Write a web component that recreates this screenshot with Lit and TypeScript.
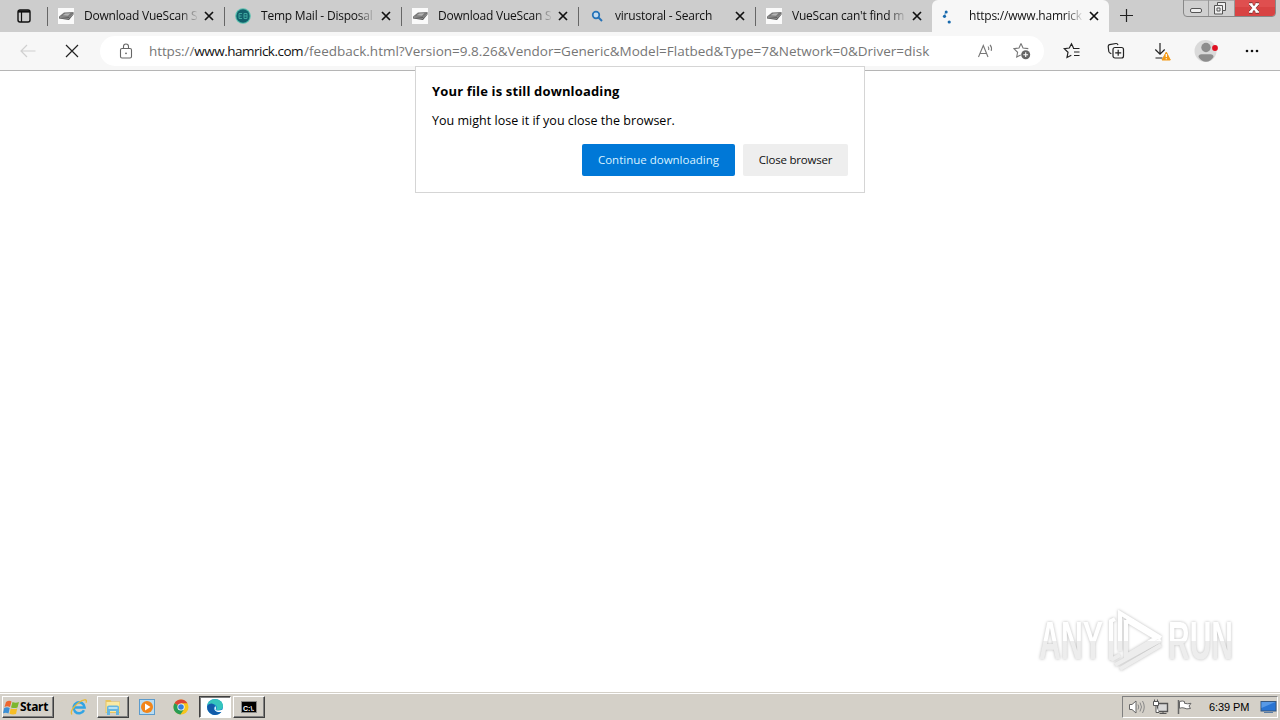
import {LitElement, html, css, svg} from 'lit';
import {customElement, property} from 'lit/decorators.js';
import {classMap} from 'lit/directives/class-map.js';


const scannerIcon = svg`
    <rect width="16" height="16" fill="#fafafa"/>
    <path d="M1 8.5 6 4.5 15.5 4 11 9z" fill="#777"/>
    <path d="M4.5 7.3 7.5 5.5 12.5 5.3 10 7.7z" fill="#b5b5b5"/>
    <path d="M1 8.5 11 9 15.5 4v2.5L11 12 1 10.5z" fill="#555"/>
    <path d="M1.5 9.5 11 10.4 15 6" fill="none" stroke="#aaa" stroke-width=".7"/>
`;

const mailIcon = svg`
    <circle cx="8" cy="8" r="7.8" fill="#55bfae"/>
    <circle cx="8" cy="8" r="6.7" fill="#12606b"/>
    <path d="M7 5.5H4v5h3M4 8h2.5M9 5.5h3v5H9zM9 8h3" fill="none" stroke="#3fa79f" stroke-width="1"/>
`;

const searchIcon = svg`
    <circle cx="7" cy="7" r="3.3" fill="#c5dcef" stroke="#2673b8" stroke-width="1.7"/>
    <path d="M9.5 9.5 13 13" stroke="#2673b8" stroke-width="2"/>
`;

const spinnerIcon = svg`
    <g fill="#1769ad">
        <circle cx="6.2" cy="4" r="1.5"/>
        <circle cx="4.5" cy="8.3" r="1.6"/>
        <circle cx="9.2" cy="14" r="1.6"/>
        <circle cx="5" cy="6" r="1" opacity=".4"/>
    </g>
`;

const favicons = {
    scanner: scannerIcon,
    mail: mailIcon,
    search: searchIcon,
    spinner: spinnerIcon,
};

const tabs = [
    {title: 'Download VueScan S', icon: 'scanner', active: false},
    {title: 'Temp Mail - Disposal', icon: 'mail', active: false},
    {title: 'Download VueScan S', icon: 'scanner', active: false},
    {title: 'virustoral - Search', icon: 'search', active: false},
    {title: "VueScan can't find m", icon: 'scanner', active: false},
    {title: 'https://www.hamrick', icon: 'spinner', active: true},
];


@customElement('browser-tab')
class BrowserTab extends LitElement {

    @property()
    title: string = '';

    @property()
    icon: keyof typeof favicons = 'scanner';

    @property({type: Boolean})
    active: boolean = false;

    render() {
        return html`
            <div class=${classMap({tab: true, active: this.active, url: this.icon === 'spinner'})}>
                <svg class="favicon" width="16" height="16" viewBox="0 0 16 16">${favicons[this.icon]}</svg>
                <span class="title">${this.title}</span>
                <svg class="close" width="10" height="10"><path d="M1 1l8 8M9 1l-8 8" stroke="#111" stroke-width="1.7"/></svg>
            </div>
        `;
    }

    static styles = css`

        :host {
            display: block;
            width: 177px;
            height: 32px;
        }

        .tab {
            box-sizing: border-box;
            height: 32px;
            display: flex;
            align-items: center;
            padding-left: 11px;
            background: linear-gradient(#666, #666) 0 7px / 1px 19px no-repeat;
        }

        .tab.active {
            background: #f7f7f7;
            border-radius: 6px 6px 0 0;
            padding-left: 8px;
        }

        .title {
            width: 114px;
            margin-left: 10px;
            white-space: nowrap;
            font: 12px/20px "Open Sans", sans-serif;
            letter-spacing: -0.22px;
            color: #111;
            -webkit-mask-image: linear-gradient(90deg, #000 96px, transparent 115px);
        }

        .url .title {
            margin-left: 13px;
        }

        .close {
            margin-left: 6px;
        }
    `;
}


@customElement('browser-toolbar')
class BrowserToolbar extends LitElement {

    render() {
        return html`
            <div class="bar">
                <svg class="back" width="16" height="14"><path d="M15.5 7H1M7 1 1 7l6 6" fill="none" stroke="#d0d0d0" stroke-width="1.2"/></svg>
                <svg class="stop" width="14" height="14"><path d="M1 1l12 12M13 1 1 13" stroke="#222" stroke-width="1.2"/></svg>
                <div class="address">
                    <svg class="lock" width="14" height="16">
                        <rect x="1.5" y="5.5" width="11" height="9.5" rx="1.5" fill="none" stroke="#666" stroke-width="1.1"/>
                        <path d="M4.5 5.5v-2a2.5 2.5 0 0 1 5 0v2" fill="none" stroke="#666" stroke-width="1.1"/>
                        <circle cx="7" cy="10.3" r=".9" fill="#666"/>
                    </svg>
                    <div class="text"><span>https://</span><span class="domain">www.hamrick.com</span><span class="path">/feedback.html?Version=9.8.26&amp;Vendor=Generic&amp;Model=Flatbed&amp;Type=7&amp;Network=0&amp;Driver=disk</span></div>
                    <svg class="read" width="18" height="16" fill="none" stroke="#777" stroke-width="1.1">
                        <path d="M1.5 14 6.3 2.5 11 14M3 10.5h6.5M11 3.5q1.300 1.500.6 3.500M13 1.800q2.300 2.700 1.200 6"/>
                    </svg>
                    <svg class="favorite" width="18" height="18">
                        <path d="M8 1.500l2 4.500 5.300.6M8 1.500 6 6l-5 .700 3.600 3.600L3.700 15l4-2" fill="none" stroke="#777" stroke-width="1.1"/>
                        <circle cx="12.700" cy="12.700" r="4.500" fill="#666"/>
                        <path d="M10.300 12.700h4.800M12.700 10.300v4.800" stroke="#fff" stroke-width="1.1"/>
                    </svg>
                </div>
                <div class="actions">
                    <svg width="18" height="18" fill="none" stroke="#222" stroke-width="1.2">
                        <path d="M10.500 6 8.500 1.800 6.300 6l-5 .700L5 10.300 4 15.500l4.300-2.200M10 6.500h6.500M11 10h5.500M11 13.500h5.500"/>
                    </svg>
                    <svg width="18" height="18" fill="none" stroke="#222" stroke-width="1.2">
                        <path d="M4.300 11.700 3 11q-1-.5-1.200-1.500L1.200 4.500q0-1.500 1.300-1.800L9 1.500q1.500-.2 2 1.500"/>
                        <rect x="6" y="5.500" width="10.500" height="10.500" rx="2"/>
                        <path d="M11.200 7.800v6M8.200 10.800h6"/>
                    </svg>
                    <svg class="downloads" width="18" height="20">
                        <path d="M7 2v11M2.300 8.500 7 13.200l4.700-4.700M2.500 17h7" fill="none" stroke="#222" stroke-width="1.2"/>
                        <path d="M13.300 11 17.300 19H9z" fill="#f39a16" stroke="#f39a16" stroke-linejoin="round"/>
                        <path d="M13.300 13v3M13.300 17.200v1" stroke="#fff" stroke-width="1.2"/>
                    </svg>
                    <svg class="profile" width="24" height="24">
                        <circle cx="11.500" cy="12" r="11" fill="#dadada"/>
                        <circle cx="12" cy="8.500" r="4.700" fill="#8d8d8d"/>
                        <path d="M4.500 18q0-2.700 3-2.700h9q3 0 3 2.700-3 4.700-7.500 4.700T4.500 18" fill="#8d8d8d"/>
                        <circle cx="21" cy="9" r="2.900" fill="#e01022"/>
                    </svg>
                    <svg width="16" height="4" fill="#111"><circle cx="3" cy="2" r="1.3"/><circle cx="8" cy="2" r="1.3"/><circle cx="13" cy="2" r="1.3"/></svg>
                </div>
            </div>
        `;
    }

    static styles = css`

        :host {
            display: block;
        }

        .bar {
            box-sizing: border-box;
            height: 39px;
            display: flex;
            align-items: center;
            padding: 0 20px;
            background: #f7f7f7;
            border-bottom: 1px solid #b5b5b5;
        }

        .stop {
            margin-left: 29px;
        }

        .address {
            box-sizing: border-box;
            width: 944px;
            height: 30px;
            margin-left: 21px;
            padding: 0 13px 0 19px;
            display: flex;
            align-items: center;
            background: #fff;
            border-radius: 15px;
        }

        .text {
            margin-left: 16px;
            flex: 1;
            white-space: nowrap;
            font: 13.5px/20px "Open Sans", sans-serif;
            color: #767676;
            letter-spacing: -0.1px;
        }

        .domain {
            color: #111;
            letter-spacing: -0.5px;
        }

        .path {
            margin-left: 1px;
            letter-spacing: 0;
        }

        .favorite {
            margin-left: 18px;
        }

        .actions {
            flex: 1;
            display: flex;
            align-items: center;
            justify-content: space-between;
            margin-left: 19px;
        }

        .downloads {
            margin-left: 2px;
            margin-right: -2px;
        }
    `;
}


@customElement('download-dialog')
class DownloadDialog extends LitElement {

    render() {
        return html`
            <h3>Your file is still downloading</h3>
            <p>You might lose it if you close the browser.</p>
            <div class="buttons">
                <button class="primary">Continue downloading</button>
                <button class="secondary">Close browser</button>
            </div>
        `;
    }

    static styles = css`

        :host {
            display: block;
            box-sizing: border-box;
            width: 450px;
            height: 127px;
            padding: 14px 16px 16px;
            background: #fff;
            border: 1px solid #d5d5d5;
            font-family: "Open Sans", sans-serif;
            color: #000;
        }

        h3 {
            margin: 0;
            font-size: 13px;
            line-height: 20px;
            font-weight: 700;
            letter-spacing: 0.15px;
        }

        p {
            margin: 10px 0 13px;
            font-size: 12.5px;
            line-height: 20px;
            letter-spacing: 0.02px;
        }

        .buttons {
            display: flex;
            justify-content: flex-end;
            gap: 8px;
        }

        button {
            height: 32px;
            padding: 0;
            border: none;
            border-radius: 2px;
            font: 11.5px/20px "Open Sans", sans-serif;
            white-space: nowrap;
        }

        .primary {
            width: 153px;
            background: #0078d7;
            color: #d9f2ff;
        }

        .secondary {
            width: 105px;
            background: #eee;
            color: #111;
            letter-spacing: -0.2px;
        }
    `;
}


@customElement('task-bar')
class TaskBar extends LitElement {

    render() {
        return html`
            <div class="start">
                <svg width="17" height="17">
                    <path d="M3 3q3-2 5.500-.5L7 8Q4 6.700 1.500 8z" fill="#ed6730"/>
                    <path d="M9.500 3q3 1.500 6.500 0L14.500 8.500q-3 1.200-6.500 0z" fill="#7db72f"/>
                    <path d="M1.200 9Q4 7.700 6.700 9L5.500 14.500Q3 13 0 14.200z" fill="#3c8fd5"/>
                    <path d="M7.700 9.500q3.500 1 6.500 0L13 15q-3.500 1-6.500-.3z" fill="#f6bd24"/>
                </svg>
                <b>Start</b>
            </div>
            <div class="apps">
                <div class="app">
                    <svg width="18" height="18">
                        <path d="M14 12.300A5.500 5.500 0 1 1 14.600 9.500H5" fill="none" stroke="#31a4e4" stroke-width="2.500"/>
                        <path d="M2 16.500C-1 13 8 3 14.500 1.800q2.700-.3 1.500 3" fill="none" stroke="#e6b93b" stroke-width="1.300"/>
                    </svg>
                </div>
                <div class="app raised">
                    <svg width="18" height="18">
                        <path d="M1.500 2h5l1 1.500H16V15H1.500z" fill="#e8c45f"/>
                        <path d="M2.500 4h13v10h-13z" fill="#fae9a2"/>
                        <path d="M3 9q0-1.500 2-1.500h8q2 0 2 1.500v8h-3v-4H6v4H3z" fill="#66b6df"/>
                        <path d="M4.500 9h9v2h-9z" fill="#b6e2f4"/>
                    </svg>
                </div>
                <div class="app">
                    <svg width="18" height="18">
                        <rect x="1.500" y="1.500" width="15" height="15" fill="#b9dcf2" stroke="#5c9bcc"/>
                        <circle cx="9" cy="9" r="6" fill="#f28519"/>
                        <path d="M7 5.500v7L12.500 9z" fill="#fff"/>
                    </svg>
                </div>
                <div class="app">
                    <svg width="18" height="18">
                        <circle cx="9" cy="9" r="7.500" fill="#f6c51d"/>
                        <path d="M9 9 2.500 5.200A7.500 7.500 0 0 1 15.500 5.300H9z" fill="#dc4435"/>
                        <path d="M9 9 2.500 5.200A7.500 7.500 0 0 0 8.400 16.500L12.200 11z" fill="#279c55"/>
                        <circle cx="9" cy="9" r="3.600" fill="#fff"/>
                        <circle cx="9" cy="9" r="2.800" fill="#347fdd"/>
                    </svg>
                </div>
                <div class="app pressed">
                    <svg width="18" height="18">
                        <circle cx="9" cy="9" r="8" fill="#1689cf"/>
                        <path d="M1.300 7C3-.7 16.500-1 17 8q-.3 4-4.500 4H10q2-3-.5-5T1.300 7z" fill="#35c5bd"/>
                        <path d="M1.300 8C3 4.500 8 4.500 9 8q-3 3 1.500 6 2.500 1 5.500-.5-4.500 5-9.500 3Q.5 14 1.300 8z" fill="#125ba9"/>
                        <path d="M9.200 8q1.500 2 .3 3.700 2.500 1.800 7.500-.2v2q-4 1-6.500 0-3.300-1.500-1.300-5.500z" fill="#fff"/>
                    </svg>
                </div>
                <div class="app raised">
                    <svg width="18" height="14">
                        <rect x="1.500" y="1.500" width="15" height="11" fill="#000" stroke="#888"/>
                        <text x="3" y="10.500" class="prompt">C:\\.</text>
                    </svg>
                </div>
            </div>
            <div class="tray">
                <svg width="18" height="16" fill="none" stroke="#666">
                    <path d="M1.500 5.500H4L8 2v12l-4-3.500H1.500z" fill="#fff"/>
                    <path d="M10 5.500q1.500 2.500 0 5M12 3.500q3 4.500 0 9M14.500 2q3.500 6 0 12" stroke="#888"/>
                </svg>
                <svg width="18" height="16" fill="none" stroke="#555">
                    <path d="M5.500 4.500h10v8h-10z" fill="#d9d9d9" stroke-width="1.400"/>
                    <path d="M7.500 14.500h7M11 12.500v2"/>
                    <path d="M1.500 2.500h5v4h-5zM2.500.5v2M5.500.5v2M4 6.500v7h3" fill="#fff"/>
                </svg>
                <svg width="18" height="16">
                    <path d="M2.500 1v14" stroke="#666" stroke-width="1.500"/>
                    <path d="M3.500 2.500q3-1 5 0v1.800q3 1 6.500 0L13 7l1.500 2.500q-4 1-6.500-.5-2-.7-4.500.3z" fill="#fff" stroke="#666"/>
                </svg>
                <time>6:39 PM</time>
                <svg class="desktop" width="17" height="14">
                    <rect x="1" y="1.500" width="15" height="9.500" fill="#2874d3" stroke="#35577f"/>
                    <path d="M1.500 2h14L1.500 8z" fill="#5799e6"/>
                    <path d="M4 12.500h9" stroke="#5b7da4"/>
                </svg>
            </div>
        `;
    }

    static styles = css`

        :host {
            display: flex;
            box-sizing: border-box;
            height: 28px;
            padding: 3px 2px 2px;
            background: #d4d0c8;
            border-top: 1px solid #d4d0c8;
            box-shadow: inset 0 1px #fff;
            font-family: "Liberation Sans", sans-serif;
            color: #000;
        }

        .start, .raised {
            border: 1px solid;
            border-color: #fff #404040 #404040 #fff;
            box-shadow: inset -1px -1px #808080;
        }

        .start {
            box-sizing: border-box;
            width: 52px;
            height: 22px;
            display: flex;
            align-items: center;
        }

        .start b {
            font: bold 12px/16px "Noto Sans", sans-serif;
            letter-spacing: -0.3px;
        }

        .apps {
            flex: 1;
            display: flex;
            gap: 2px;
            margin-left: 9px;
        }

        .app {
            box-sizing: border-box;
            width: 32px;
            height: 22px;
            display: flex;
            align-items: center;
            justify-content: center;
        }

        .pressed {
            background: #fff;
            border: 1px solid;
            border-color: #404040 #fff #fff #404040;
            box-shadow: inset 1px 1px #808080;
        }

        .prompt {
            font: bold 7px "Liberation Sans", sans-serif;
            fill: #fff;
        }

        .tray {
            box-sizing: border-box;
            width: 156px;
            height: 22px;
            display: flex;
            align-items: center;
            gap: 6px;
            padding-left: 5px;
            border: 1px solid;
            border-color: #808080 #fff #fff #808080;
        }

        time {
            width: 41px;
            margin-left: 9px;
            font-size: 11px;
            letter-spacing: -0.1px;
            white-space: nowrap;
        }

        .desktop {
            margin-left: 4px;
        }
    `;
}


@customElement('app-root')
class AppRoot extends LitElement {

    render() {
        return html`
            <header>
                <div class="tab-actions">
                    <svg width="16" height="14"><rect x="2" y="1" width="12" height="12" rx="2" fill="none" stroke="#111" stroke-width="1.4"/><path d="M2 2.500h12" stroke="#111" stroke-width="2.2"/><path d="M5.500 3v10" stroke="#111" stroke-width="1.2"/></svg>
                </div>
                ${tabs.map(tab => html`<browser-tab .title=${tab.title} .icon=${tab.icon} .active=${tab.active}></browser-tab>`)}
                <svg class="new-tab" width="14" height="14"><path d="M6.500 0v13M0 6.500h13" stroke="#222" stroke-width="1.2"/></svg>
                <svg class="window-buttons" width="94" height="18">
                    <path d="M.5 0v13q0 3.500 3.500 3.500h85q3.500 0 3.500-3.500V0z" fill="#d0d0d0" stroke="#888"/>
                    <path d="M52 0h40v13q0 3-3 3H52z" fill="#d84343"/>
                    <path d="M52 0h40v7H52z" fill="#df4f4f"/>
                    <path d="M25.500 0v16M51.500 0v16" stroke="#999"/>
                    <rect x="7.500" y="8.500" width="11" height="4" rx="1.500" fill="#eee" stroke="#555"/>
                    <path d="M34.500 2.500h8v8h-3v3.500h-8V5.500h3z" fill="#eee" stroke="#555"/>
                    <path d="M34.500 5.500h5v5M34 8h3v3h-3z" fill="none" stroke="#555"/>
                    <path d="M67.500 4 74.500 12M74.500 4 67.500 12M66 4h3.500M72.500 4H76M66 12h3.500M72.500 12H76" stroke="#733" stroke-width="3.5"/>
                    <path d="M67.500 4 74.500 12M74.500 4 67.500 12" stroke="#fff" stroke-width="2.600"/>
                    <path d="M66 4h3.500M72.500 4H76M66 12h3.500M72.500 12H76" stroke="#fff" stroke-width="1.6"/>
                </svg>
            </header>
            <browser-toolbar></browser-toolbar>
            <main></main>
            <download-dialog></download-dialog>
            <svg class="watermark" width="210" height="70" viewBox="0 0 210 70">
                <defs>
                    <linearGradient id="fade" gradientUnits="userSpaceOnUse" x1="0" y1="0" x2="0" y2="70">
                        <stop offset=".52" stop-color="#fff"/>
                        <stop offset=".52" stop-color="#ededed"/>
                    </linearGradient>
                </defs>
                <g class="shape">
                    <text x="9" y="54" textLength="64" lengthAdjust="spacingAndGlyphs" fill="url(#fade)">ANY</text>
                    <text x="138" y="54" textLength="65" lengthAdjust="spacingAndGlyphs" fill="url(#fade)">RUN</text>
                    <path d="M81 55V16l4-2M90 46V8l41 25M96 15v36l30-18-30-18M85 60l46-25M90 64l41-24M81 55l9-5" fill="none" stroke="url(#fade)" stroke-width="4"/>
                </g>
            </svg>
            <task-bar></task-bar>
        `;
    }

    static styles = css`

        :host {
            position: relative;
            display: flex;
            flex-direction: column;
            width: 1280px;
            height: 720px;
            overflow: hidden;
            background: #fff;
        }

        header {
            display: flex;
            height: 32px;
            background: #cdcdcd;
        }

        .tab-actions {
            width: 47px;
            display: flex;
            align-items: center;
            justify-content: center;
        }

        .new-tab {
            margin: 9px 0 0 11px;
        }

        .window-buttons {
            margin-left: auto;
            margin-right: 3px;
        }

        main {
            flex: 1;
        }

        download-dialog {
            position: absolute;
            left: 415px;
            top: 66px;
        }

        .watermark {
            position: absolute;
            left: 1030px;
            top: 605px;
            overflow: visible;
            font: bold 53px "Liberation Sans", sans-serif;
        }

        .shape {
            filter: drop-shadow(0 0 1.5px #bbb);
        }
    `;
}
